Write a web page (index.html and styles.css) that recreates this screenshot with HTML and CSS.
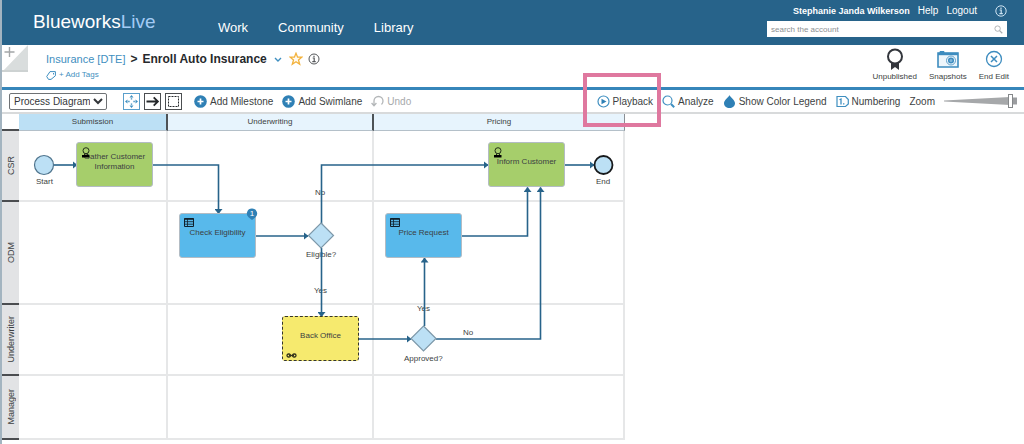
FILE: index.html
```html
<!DOCTYPE html>
<html lang="en">
<head>
<meta charset="utf-8">
<title>Enroll Auto Insurance - Blueworks Live</title>
<link rel="stylesheet" href="styles.css">
</head>
<body>
<div class="app">
  <header class="banner">
    <div class="logo">Blueworks<span class="logo-live">Live</span></div>
    <nav class="nav">
      <a href="#">Work</a>
      <a href="#">Community</a>
      <a href="#">Library</a>
    </nav>
    <div class="account">
      <div class="account-row">
        <strong class="user">Stephanie Janda Wilkerson</strong>
        <a href="#">Help</a>
        <a href="#">Logout</a>
        <svg class="account-info" viewBox="0 0 12 12" width="12" height="12" fill="none" stroke="#cfe4f2"><circle cx="6" cy="6" r="5.2"/><path d="M4.6 5h1.6v3.6M4.4 8.7h3.4M6 2.6v1.3" stroke-width="1.2"/></svg>
      </div>
      <form class="search">
        <input class="search-input" type="text" placeholder="search the account" aria-label="search the account">
        <svg viewBox="0 0 10 10" width="9" height="9" fill="none" stroke="#a9adb0"><circle cx="4" cy="4" r="3"/><path d="M6.2 6.2l3 3" stroke-width="1.4"/></svg>
      </form>
    </div>
  </header>

  <section class="titlebar">
    <svg class="corner" viewBox="0 0 26 27" width="26" height="27"><path d="M26 0V27H0z" fill="#d9dddd"/><path d="M26 27H0v-2h26z" fill="#cdd2d2"/><path d="M7.500 2v10M2.500 7h10" stroke="#a3a6a8" stroke-width="1.4"/></svg>
    <div class="heading">
      <h1 class="crumbs">
        <a href="#">Insurance [DTE]</a>
        <span class="gt">&gt;</span>
        <span class="process">Enroll Auto Insurance</span>
        <svg class="chevron" viewBox="0 0 8 8" width="8" height="8" fill="none" stroke="#3f8fc0" stroke-width="1.4"><path d="M1 3l3 3 3-3"/></svg>
        <svg viewBox="0 0 14 14" width="14" height="14" fill="#fffaf0" stroke="#f3b23c" stroke-width="1.3"><path d="M7 1.200l1.600 4h4.200l-3.300 2.700 1.200 4.400L7 9.800l-3.700 2.500 1.200-4.400L1.200 5.200h4.200z"/></svg>
        <svg viewBox="0 0 12 12" width="12" height="12" fill="none" stroke="#55585b"><circle cx="6" cy="6" r="5"/><path d="M4.700 5h1.500v3.400M4.300 8.600h3.400M6 2.800v1.200" stroke-width="1.200"/></svg>
      </h1>
      <a class="tags" href="#">
        <svg viewBox="0 0 10 9" width="10" height="9" fill="none" stroke="#3f8fc0"><path d="M4 .6h5.400v4.200L5 8.400H2.500L.7 5.500z"/><path d="M7.500 2v1.500"/></svg>
        <span>+ Add Tags</span>
      </a>
    </div>
    <div class="actions">
      <button class="action" type="button">
        <svg viewBox="0 0 18 23" width="18" height="23"><path d="M5 14h8v8l-4-3-4 3z" fill="#33363c"/><circle cx="9" cy="8.500" r="7" fill="#fff" stroke="#33363c" stroke-width="2"/></svg>
        Unpublished
      </button>
      <button class="action" type="button">
        <svg viewBox="0 0 24 23" width="24" height="23" fill="none" stroke="#3d8cbf"><path d="M4 3.500h4v1.500H4z" fill="#3d8cbf"/><path d="M2 5h20v14H2z" fill="#eef6fb" stroke-width="1.600"/><path d="M2 6h20" stroke-width="2.400"/><circle cx="15" cy="12.500" r="4.500" stroke-width=".8"/><circle cx="15" cy="12.500" r="2.300" fill="#7fb5d9" stroke-width="1.500"/></svg>
        Snapshots
      </button>
      <button class="action" type="button">
        <svg viewBox="0 0 18 23" width="18" height="23" fill="none" stroke="#3d8cbf"><circle cx="9" cy="11" r="7.500" stroke-width="1.300"/><path d="M6 8l6 6M12 8l-6 6" stroke-width="1.500"/></svg>
        End Edit
      </button>
    </div>
  </section>

  <section class="toolbar">
    <select class="view" aria-label="View"><option>Process Diagram</option></select>
    <div class="modes">
      <button class="mode mode-on" type="button" aria-label="Move"><svg viewBox="0 0 15 15" width="15" height="15" fill="#3f8fc0"><path d="M7.500 1l2 2.500h-4zM7.500 14l2-2.500h-4zM1 7.500l2.500-2v4zM14 7.500l-2.500-2v4z"/><path d="M6.800 4.200h1.400v1.400H6.800zM6.800 9.400h1.400v1.400H6.800zM4.200 6.800h1.400v1.400H4.200zM9.400 6.800h1.400v1.400H9.400z"/></svg></button>
      <button class="mode" type="button" aria-label="Connect"><svg viewBox="0 0 15 15" width="15" height="15" fill="none" stroke="#25282b" stroke-width="1.800"><path d="M1.500 7.500h11M8.700 3.300l4.200 4.200-4.200 4.200"/></svg></button>
      <button class="mode" type="button" aria-label="Select"><svg viewBox="0 0 15 15" width="15" height="15" fill="none" stroke="#25282b"><path d="M2.500 2.500h10v10h-10z" stroke-dasharray="2 1"/></svg></button>
    </div>
    <div class="tools edit">
      <button class="tool" type="button"><svg viewBox="0 0 13 13" width="13" height="13"><circle cx="6.500" cy="6.500" r="6.300" fill="#2f80b5"/><path d="M6.500 3.500v6M3.500 6.500h6" stroke="#fff" stroke-width="1.700"/></svg>Add Milestone</button>
      <button class="tool" type="button"><svg viewBox="0 0 13 13" width="13" height="13"><circle cx="6.500" cy="6.500" r="6.300" fill="#2f80b5"/><path d="M6.500 3.500v6M3.500 6.500h6" stroke="#fff" stroke-width="1.700"/></svg>Add Swimlane</button>
      <button class="tool" type="button" disabled><svg viewBox="0 0 13 13" width="13" height="13" fill="none" stroke="#b3b6b8" stroke-width="1.300"><path d="M3 10V6a4.500 4.500 0 0 1 9 0c0 1.500-.5 2.500-1.500 3.500M.6 8L3 10.800 5.400 8"/></svg>Undo</button>
    </div>
    <div class="tools right">
      <button class="tool playback" type="button"><svg viewBox="0 0 13 13" width="13" height="13"><circle cx="6.500" cy="6.500" r="5.500" fill="none" stroke="#3f8fc0" stroke-width="1.200"/><path d="M4.500 3.700l5 2.800-5 2.800z" fill="#2f80b5"/></svg>Playback</button>
      <button class="tool" type="button"><svg viewBox="0 0 13 13" width="13" height="13" fill="none" stroke="#3f8fc0"><circle cx="5.500" cy="5.500" r="4.500" stroke-width="1.200"/><path d="M9 9l3.200 3.200" stroke-width="2"/></svg>Analyze</button>
      <button class="tool" type="button"><svg viewBox="0 0 13 13" width="13" height="13"><path d="M6.500 0C7.300 2.300 12 5 12 8.200 12 11 9.500 13 6.500 13S1 11 1 8.200C1 5 5.700 2.300 6.500 0z" fill="#2f80b5"/></svg>Show Color Legend</button>
      <button class="tool" type="button"><svg viewBox="0 0 13 13" width="13" height="13" fill="none" stroke="#3f8fc0" stroke-width="1.200"><path d="M1 1.500h8.500L12.300 4.500v4.500L9.500 11.500H1z"/><path d="M3.500 4.800L5 4v5.500M7 8.800h1.400" stroke-width="1.300"/></svg>Numbering</button>
      <label class="zoom" for="zoom">Zoom</label>
      <div class="slider">
        <svg class="wedge" viewBox="0 0 73 14" preserveAspectRatio="none"><path d="M0 6.500L66 3v8L0 7.500z" fill="#a6a8aa"/><path d="M68 3.500h5v7h-5z" fill="#9b9da0"/></svg>
        <input id="zoom" class="range" type="range" min="0" max="100" value="94">
      </div>
    </div>
  </section>

  <main class="diagram">
    <div class="board">
      <div class="blank"></div>
      <div class="milestone milestone-on">Submission</div>
      <div class="milestone">Underwriting</div>
      <div class="milestone last">Pricing</div>
      <div class="lane"><span>CSR</span></div><div class="cell"></div><div class="cell"></div><div class="cell"></div>
      <div class="lane"><span>ODM</span></div><div class="cell"></div><div class="cell"></div><div class="cell"></div>
      <div class="lane"><span>Underwriter</span></div><div class="cell"></div><div class="cell"></div><div class="cell"></div>
      <div class="lane"><span>Manager</span></div><div class="cell"></div><div class="cell"></div><div class="cell"></div>

      <span class="caption no-up">No</span>
      <span class="caption eligible">Eligible?</span>
      <span class="caption yes-down">Yes</span>
      <span class="caption yes-up">Yes</span>
      <svg class="flows" viewBox="2 114 626 326" width="626" height="326">
        <defs>
          <marker id="tip" markerUnits="userSpaceOnUse" markerWidth="6" markerHeight="8" refX="4.500" refY="4" orient="auto"><path d="M0 0l5 4-5 4z" fill="#27638a"/></marker>
        </defs>
        <g fill="none" stroke="#27638a" stroke-width="1.600" marker-end="url(#tip)">
          <path class="flow" d="M54 165H77"/>
          <path class="flow" d="M153 165H218.500V213.500"/>
          <path class="flow" d="M256 236H308"/>
          <path class="flow" d="M321.500 224V165H488"/>
          <path class="flow" d="M321.500 248V316.500"/>
          <path class="flow" d="M359 339H411"/>
          <path class="flow" d="M424.500 326V258"/>
          <path class="flow" d="M462 236H527.500V187.500"/>
          <path class="flow" d="M436 339H540.500V187.500"/>
          <path class="flow" d="M565 165H594"/>
        </g>
        <g fill="#bce0f5" stroke="#7d98a9" stroke-width="1.200">
          <circle cx="44" cy="165" r="9.500" stroke="#4f748d"/>
          <path d="M321 223l12.500 12.500L321 248l-12.500-12.500z"/>
          <path d="M423.500 326l12.500 12.500-12.500 12.500-12.500-12.500z"/>
          <circle cx="603.500" cy="165" r="9" stroke="#17191b" stroke-width="1.800"/>
        </g>
      </svg>

      <div class="node person gather">
        <svg class="glyph" viewBox="0 0 10 11" width="10" height="11"><circle cx="5" cy="3.700" r="3" fill="none" stroke="#24301a"/><path d="M3.500 6.500v2M6.500 6.500v2" stroke="#24301a"/><path d="M1 8h7.500v2.500H1z" fill="#000"/></svg>
        <span>Gather Customer Information</span>
      </div>
      <div class="node person inform">
        <svg class="glyph" viewBox="0 0 10 11" width="10" height="11"><circle cx="5" cy="3.700" r="3" fill="none" stroke="#24301a"/><path d="M3.500 6.500v2M6.500 6.500v2" stroke="#24301a"/><path d="M1 8h7.500v2.500H1z" fill="#000"/></svg>
        <span>Inform Customer</span>
      </div>
      <div class="node rule check">
        <svg class="glyph" viewBox="0 0 10 9" width="10" height="9" fill="none" stroke="#10202b"><path d="M.5.5h9v8h-9z"/><path d="M.5 1h9" stroke-width="1.600"/><path d="M.5 3.700h9M.5 6.200h9M3.500 1v7.500" stroke-width=".8"/></svg>
        <span>Check Eligibility</span>
        <svg class="badge" viewBox="0 0 12 12" width="12" height="12"><path d="M6 .5a5 5 0 0 1 3.500 8.700L6 12 2.500 9.200A5 5 0 0 1 6 .5z" fill="#2f80b5"/><text x="6" y="8" class="badge-text">1</text></svg>
      </div>
      <div class="node rule price">
        <svg class="glyph" viewBox="0 0 10 9" width="10" height="9" fill="none" stroke="#10202b"><path d="M.5.5h9v8h-9z"/><path d="M.5 1h9" stroke-width="1.600"/><path d="M.5 3.700h9M.5 6.200h9M3.500 1v7.500" stroke-width=".8"/></svg>
        <span>Price Request</span>
      </div>
      <div class="node linked office">
        <span>Back Office</span>
        <svg class="chain" viewBox="0 0 11 5" width="11" height="5" fill="none" stroke="#33321a" stroke-width="1.300"><rect x="1" y="1" width="3.500" height="3" rx="1.500"/><rect x="6.500" y="1" width="3.500" height="3" rx="1.500"/><path d="M3 2.500h5"/></svg>
      </div>
      <span class="caption start">Start</span>
      <span class="caption end">End</span>
      <span class="caption approved">Approved?</span>
      <span class="caption no-right">No</span>
    </div>
  </main>
</div>
</body>
</html>
```
FILE: styles.css
```css
* { box-sizing: border-box; }

body {
  margin: 0;
  background: #fff;
  color: #3c3f42;
  font-family: "Liberation Sans", Arial, sans-serif;
  font-size: 10px;
}

a { color: inherit; text-decoration: none; }

button {
  border: 0;
  padding: 0;
  background: none;
  color: inherit;
  font: inherit;
}

svg { flex: none; display: block; }

.app {
  min-height: 100vh;
  border-left: 2px solid #a3b4c0;
}

/* Banner */
.banner {
  display: flex;
  height: 45px;
  padding: 0 17px 0 31px;
  background: #27638a;
  color: #fff;
}

.logo {
  width: 185px;
  padding-top: 10px;
  font-size: 19px;
  line-height: 24px;
}

.logo-live { color: #a3cbf5; }

.nav {
  display: flex;
  gap: 30px;
  padding-top: 20px;
  font-size: 13px;
  line-height: 16px;
}

.account { width: 240px; margin-left: auto; }

.account-row {
  display: flex;
  align-items: center;
  justify-content: flex-end;
  gap: 8px;
  height: 21px;
}

.user { font-size: 9px; }
.account-info { margin-left: 10px; }

.search {
  display: flex;
  align-items: center;
  height: 16px;
  padding: 0 4px;
  background: #fff;
}

.search-input {
  flex: 1;
  min-width: 0;
  border: 0;
  padding: 0;
  background: none;
  font: inherit;
  font-size: 8px;
}

.search-input::placeholder { color: #8c8f92; }

/* Title bar */
.titlebar {
  display: flex;
  height: 45px;
  border-bottom: 3px solid #3686ba;
}

.heading { padding: 6px 0 0 18px; }

.crumbs {
  display: flex;
  align-items: center;
  gap: 5px;
  margin: 0;
  font-size: 12px;
  font-weight: normal;
  line-height: 16px;
}

.crumbs a, .tags { color: #3f8fc0; }
.crumbs a { font-size: 11px; }
.gt, .process { color: #26292c; font-weight: bold; }
.chevron { margin: 0 2px; }

.tags {
  display: inline-flex;
  align-items: center;
  gap: 3px;
  margin-top: 3px;
  font-size: 8px;
  line-height: 10px;
}

.actions {
  display: flex;
  gap: 12px;
  margin-left: auto;
  padding: 3px 15px 0 0;
}

.action {
  display: flex;
  flex-direction: column;
  align-items: center;
  gap: 1px;
  height: 36px;
  font-size: 8px;
  line-height: 10px;
}

/* Toolbar */
.toolbar {
  display: flex;
  align-items: center;
  height: 24px;
  padding: 0 7px 0 7px;
  border-bottom: 2px solid #d8dadb;
}

.view {
  width: 98px;
  height: 17px;
  border: 1px solid #6f7275;
  border-radius: 2px;
  padding: 0;
  background: #fff;
  color: #33363a;
  font: inherit;
}

.modes { display: flex; gap: 4px; margin-left: 16px; }

.mode {
  width: 17px;
  height: 17px;
  border: 1px solid #4b4e51;
}

.mode-on { border-color: #5a9fcb; }

.tools { display: flex; align-items: center; }
.edit { gap: 9px; margin-left: 12px; }
.right { gap: 9px; margin-left: auto; }

.tool {
  display: flex;
  align-items: center;
  gap: 3px;
  line-height: 13px;
  white-space: nowrap;
}

.tool:disabled { color: #a6a9ab; }

.playback { position: relative; }

.playback::after {
  content: "";
  position: absolute;
  inset: -22px -8px -19px -14px;
  border: 4px solid #df789f;
  z-index: 2;
  pointer-events: none;
}

.slider { display: grid; width: 73px; }
.wedge, .range { grid-area: 1 / 1; width: 100%; height: 14px; margin: 0; }
.range { appearance: none; background: none; }

.range::-webkit-slider-thumb {
  appearance: none;
  width: 5px;
  height: 14px;
  border: 1px solid #85888a;
  background: #fff;
}

/* Diagram */
.board {
  position: relative;
  display: grid;
  grid-template-columns: 17px 149px 206px 251px;
  grid-template-rows: 17px 71px 103px 71px 64px;
  width: max-content;
  font-size: 8px;
  line-height: 10px;
}

.blank { border-bottom: 2px solid #4b4d50; }

.milestone {
  padding-top: 3px;
  border-right: 2px solid #4d5256;
  border-bottom: 1px solid #b4c0c9;
  background: #e7f4fd;
  text-align: center;
}

.milestone-on { background: #bce0f5; }
.last { border-right: 1px solid #8b8f94; }

.lane {
  display: flex;
  align-items: center;
  justify-content: center;
  border-bottom: 2px solid #4b4d50;
  background: #e2e3e5;
  font-size: 9px;
}

.lane span { writing-mode: vertical-rl; transform: rotate(180deg); }

.cell {
  border-right: 2px solid #e6e7e8;
  border-bottom: 2px solid #e6e7e8;
}

.flows { position: absolute; left: 0; top: 0; }

.node {
  position: absolute;
  display: flex;
  align-items: center;
  justify-content: center;
  width: 77px;
  height: 45px;
  padding: 0 6px 6px;
  border: 1px solid #b3bcc4;
  border-radius: 3px;
  text-align: center;
}

.person { background: #a6ce6b; }
.rule { background: #58b9eb; }
.linked { background: #f6ea6e; border: 1px dashed #34342c; }

.gather { left: 74px; top: 28px; }
.inform { left: 486px; top: 28px; }
.check { left: 177px; top: 99px; }
.price { left: 383px; top: 99px; }
.office { left: 280px; top: 202px; }

.glyph { position: absolute; left: 4px; top: 4px; }
.badge { position: absolute; right: -3px; top: -6px; }
.badge-text { fill: #fff; font-size: 8px; text-anchor: middle; }
.chain { position: absolute; left: 3px; bottom: 2px; }

.caption { position: absolute; white-space: nowrap; }
.start { left: 34px; top: 63px; }
.end { left: 594px; top: 63px; }
.no-up { left: 313px; top: 74px; }
.eligible { left: 304px; top: 136px; }
.yes-down { left: 312px; top: 172px; }
.yes-up { left: 415px; top: 190px; }
.approved { left: 402px; top: 240px; }
.no-right { left: 461px; top: 214px; }
```
